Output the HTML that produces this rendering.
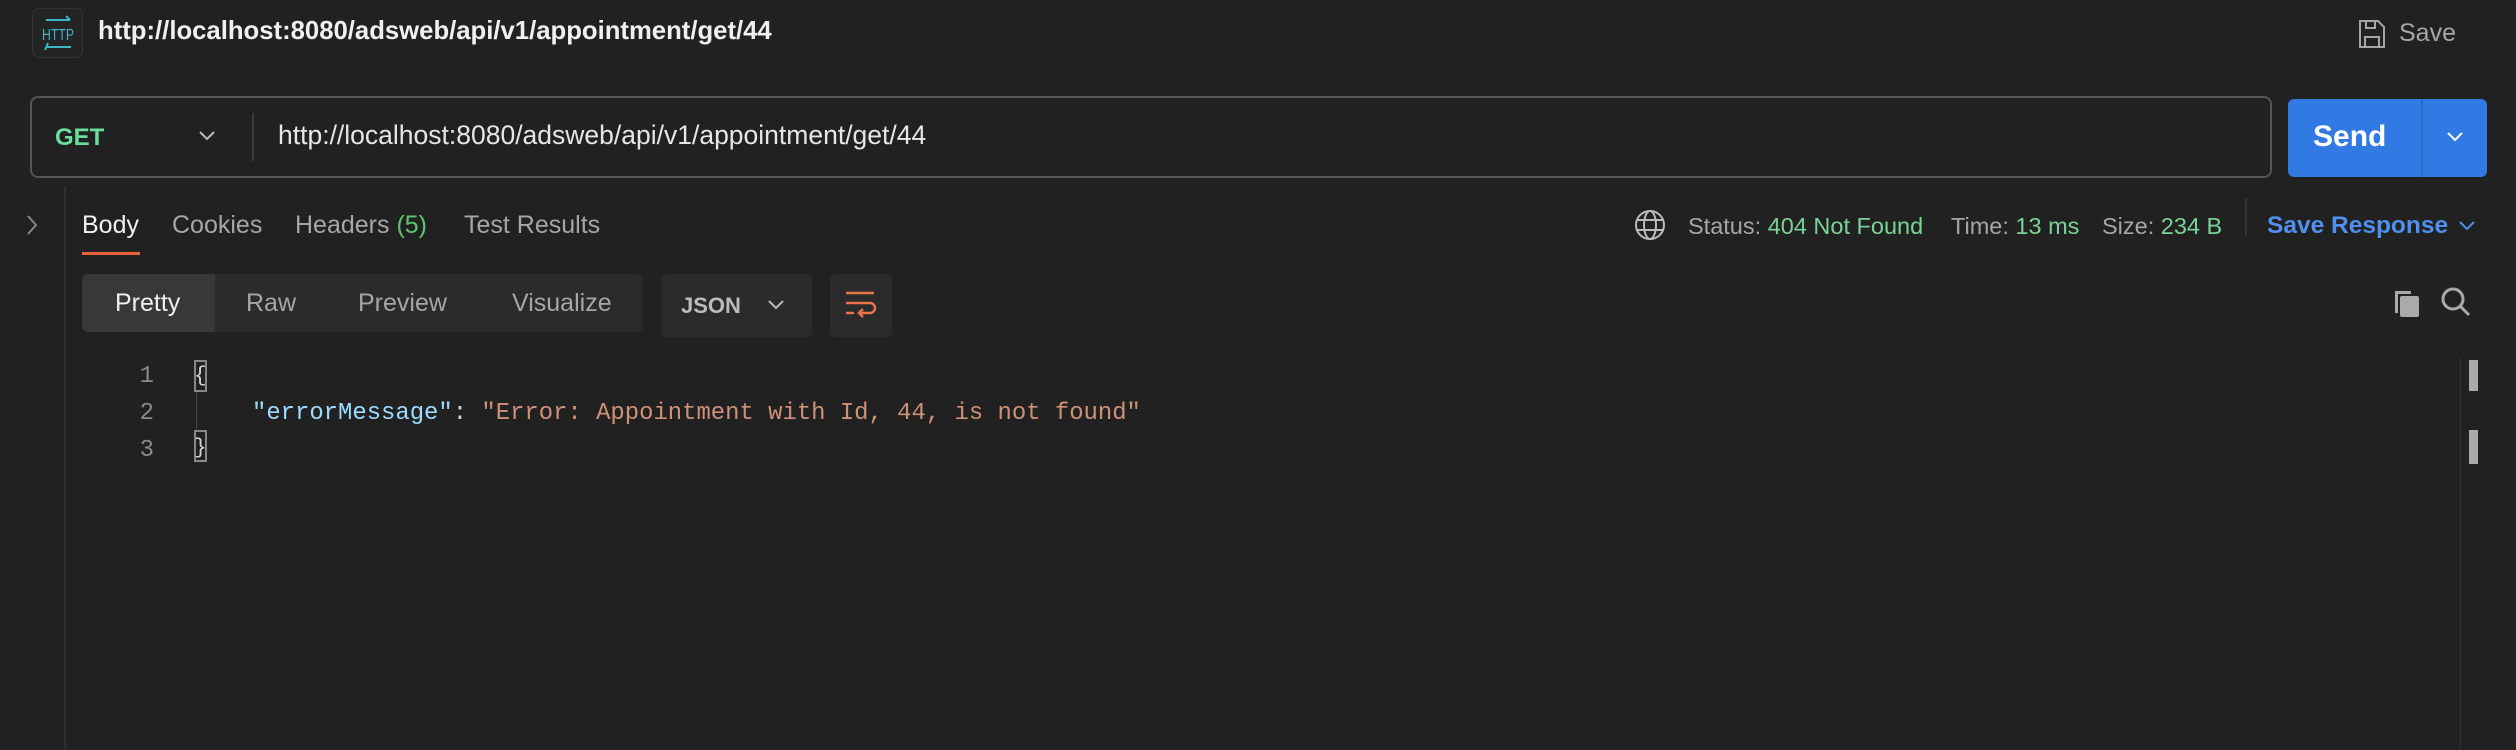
<!DOCTYPE html>
<html><head><meta charset="utf-8"><style>
*{margin:0;padding:0;box-sizing:border-box}
body{width:2516px;height:750px;background:#212121;font-family:"Liberation Sans",sans-serif;color:#e6e6e6;position:relative;overflow:hidden}
.a{position:absolute;white-space:nowrap}
.g{color:#a6a6a6}
.gr{color:#79d396}
.mono{font-family:"Liberation Mono",monospace;font-size:23.9px}
</style></head><body>
<!-- HTTP icon -->
<div class="a" style="left:32px;top:8px;width:51px;height:50px;border:1px solid #333;border-radius:7px;background:#242424"></div>
<svg class="a" style="left:38px;top:14px" width="40" height="40" viewBox="0 0 40 40">
<path d="M8 6H32M28 2L32 6" stroke="#3bb7c6" stroke-width="2" fill="none"/>
<text x="20" y="26" text-anchor="middle" font-family="Liberation Sans" font-size="16" textLength="32" lengthAdjust="spacingAndGlyphs" fill="#3bb7c6">HTTP</text>
<path d="M8 33H33M10 29L7 36" stroke="#3bb7c6" stroke-width="2" fill="none"/>
</svg>
<div class="a" style="left:98px;top:17px;font-size:25.7px;font-weight:bold;color:#f0f0f0">http://localhost:8080/adsweb/api/v1/appointment/get/44</div>
<!-- Save -->
<svg class="a" style="left:2358px;top:19px" width="28" height="30" viewBox="0 0 28 30"><path d="M2 2H20L26 8V28H2Z M8 2V9H17V2 M7 28V18H21V28" stroke="#a6a6a6" stroke-width="2" fill="none"/></svg>
<div class="a g" style="left:2399px;top:19px;font-size:25px">Save</div>
<!-- URL bar -->
<div class="a" style="left:30px;top:96px;width:2242px;height:82px;border:2px solid #555;border-radius:8px"></div>
<div class="a" style="left:55px;top:124px;font-size:24px;font-weight:bold;color:#6bdd9a">GET</div>
<svg class="a" style="left:198px;top:130px" width="18" height="12"><path d="M2 2L9 9L16 2" stroke="#bbb" stroke-width="2" fill="none"/></svg>
<div class="a" style="left:252px;top:113px;width:2px;height:48px;background:#3a3a3a"></div>
<div class="a" style="left:278px;top:120px;font-size:26.5px;color:#e6e6e6">http://localhost:8080/adsweb/api/v1/appointment/get/44</div>
<!-- Send -->
<div class="a" style="left:2288px;top:99px;width:199px;height:78px;background:#3179e3;border-radius:6px"></div>
<div class="a" style="left:2421px;top:99px;width:2px;height:78px;background:#2a69c6"></div>
<div class="a" style="left:2313px;top:120px;font-size:30px;font-weight:bold;color:#fff">Send</div>
<svg class="a" style="left:2446px;top:131px" width="18" height="12"><path d="M2 2L9 9L16 2" stroke="#fff" stroke-width="2" fill="none"/></svg>
<!-- sidebar -->
<div class="a" style="left:64px;top:186px;width:2px;height:564px;background:#2e2e2e"></div>
<svg class="a" style="left:26px;top:214px" width="12" height="22"><path d="M2 2L10 11L2 20" stroke="#888" stroke-width="2" fill="none"/></svg>
<!-- tabs -->
<div class="a" style="left:82px;top:211px;font-size:25px;color:#f0f0f0">Body</div>
<div class="a g" style="left:172px;top:211px;font-size:25px">Cookies</div>
<div class="a g" style="left:295px;top:211px;font-size:25px">Headers <span style="color:#5fc46e">(5)</span></div>
<div class="a g" style="left:464px;top:211px;font-size:25px">Test Results</div>
<div class="a" style="left:82px;top:252px;width:58px;height:3px;background:#e8633a"></div>
<!-- status -->
<svg class="a" style="left:1634px;top:209px" width="32" height="32" viewBox="0 0 32 32"><g stroke="#bbb" stroke-width="2" fill="none"><circle cx="16" cy="16" r="14"/><ellipse cx="16" cy="16" rx="6" ry="14"/><path d="M3 11H29M3 21H29"/></g></svg>
<div class="a g" style="left:1688px;top:213px;font-size:23.5px">Status: <span class="gr">404 Not Found</span></div>
<div class="a g" style="left:1951px;top:213px;font-size:23.5px">Time: <span class="gr">13 ms</span></div>
<div class="a g" style="left:2102px;top:213px;font-size:23.5px">Size: <span class="gr">234 B</span></div>
<div class="a" style="left:2245px;top:198px;width:2px;height:38px;background:#333"></div>
<div class="a" style="left:2267px;top:212px;font-size:24.5px;font-weight:bold;color:#4e8ff0">Save Response</div>
<svg class="a" style="left:2458px;top:220px" width="18" height="12"><path d="M2 2L9 9L16 2" stroke="#4e8ff0" stroke-width="2" fill="none"/></svg>
<!-- segmented -->
<div class="a" style="left:82px;top:274px;width:561px;height:58px;background:#2b2b2b;border-radius:6px"></div>
<div class="a" style="left:82px;top:274px;width:133px;height:58px;background:#383838;border-radius:6px 0 0 6px"></div>
<div class="a" style="left:115px;top:289px;font-size:25px;color:#f0f0f0">Pretty</div>
<div class="a g" style="left:246px;top:289px;font-size:25px">Raw</div>
<div class="a g" style="left:358px;top:289px;font-size:25px">Preview</div>
<div class="a g" style="left:512px;top:289px;font-size:25px">Visualize</div>
<div class="a" style="left:661px;top:274px;width:151px;height:63px;background:#2b2b2b;border-radius:6px"></div>
<div class="a" style="left:681px;top:293px;font-size:22px;font-weight:bold;color:#bbb">JSON</div>
<svg class="a" style="left:767px;top:299px" width="18" height="12"><path d="M2 2L9 9L16 2" stroke="#bbb" stroke-width="2" fill="none"/></svg>
<div class="a" style="left:830px;top:274px;width:62px;height:63px;background:#2b2b2b;border-radius:6px"></div>
<svg class="a" style="left:844px;top:290px" width="34" height="32" viewBox="0 0 34 32"><g stroke="#e8744a" stroke-width="2.5" fill="none"><path d="M2 3H30M2 13H26a5 5 0 0 1 0 10H16M19 19L15 23L19 27M2 23H10"/></g></svg>
<!-- copy/search -->
<svg class="a" style="left:2392px;top:288px" width="30" height="30" viewBox="0 0 30 30"><path d="M3 3H19V6H6V25H3Z" fill="#aaa"/><rect x="8" y="8" width="19" height="21" rx="2" fill="#aaa"/></svg>
<svg class="a" style="left:2440px;top:286px" width="32" height="32" viewBox="0 0 32 32"><circle cx="13" cy="13" r="10" stroke="#aaa" stroke-width="3" fill="none"/><path d="M20 20L29 29" stroke="#aaa" stroke-width="3"/></svg>
<!-- code -->
<div class="a mono" style="left:136px;top:358px;color:#8a8a8a;line-height:37px;text-align:right;width:18px">1<br>2<br>3</div>
<div class="a" style="left:194px;top:360px;width:13px;height:32px;border:2px solid #888"></div>
<div class="a" style="left:194px;top:430px;width:13px;height:32px;border:2px solid #888"></div>
<div class="a" style="left:196px;top:392px;width:1px;height:38px;background:#444"></div>
<div class="a mono" style="left:194px;top:358px;color:#d4d4d4;line-height:37px;font-size:21px">{</div>
<div class="a mono" style="left:194px;top:430px;color:#d4d4d4;line-height:37px;font-size:21px">}</div>
<div class="a mono" style="left:252px;top:395px;line-height:37px"><span style="color:#9cdcfe">"errorMessage"</span><span style="color:#d4d4d4">: </span><span style="color:#ce9178">"Error: Appointment with Id, 44, is not found"</span></div>
<!-- scrollbar -->
<div class="a" style="left:2460px;top:358px;width:1px;height:392px;background:#333"></div>
<div class="a" style="left:2469px;top:360px;width:9px;height:31px;background:#aaa"></div>
<div class="a" style="left:2469px;top:430px;width:9px;height:34px;background:#aaa"></div>
</body></html>
